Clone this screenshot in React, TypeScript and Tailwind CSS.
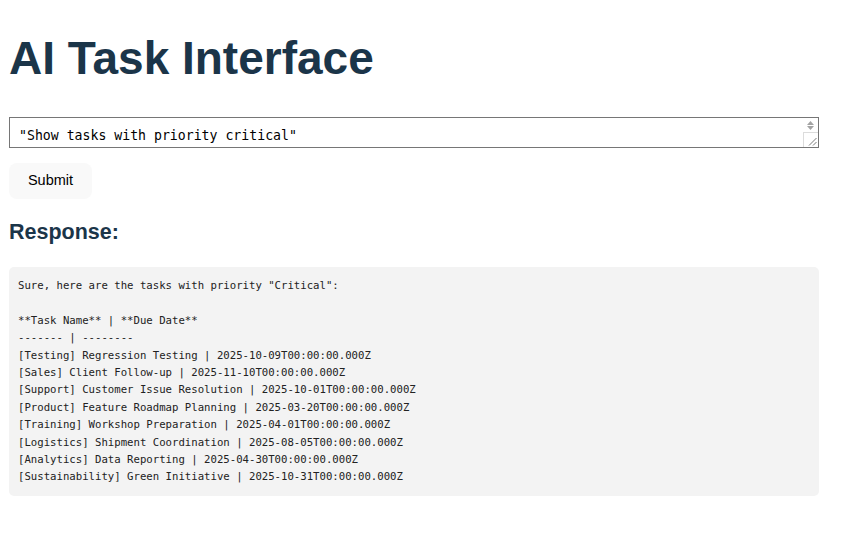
import React from "react";

const lines = [
  'Sure, here are the tasks with priority "Critical":',
  "",
  "**Task Name** | **Due Date**",
  "------- | --------",
  "[Testing] Regression Testing | 2025-10-09T00:00:00.000Z",
  "[Sales] Client Follow-up | 2025-11-10T00:00:00.000Z",
  "[Support] Customer Issue Resolution | 2025-10-01T00:00:00.000Z",
  "[Product] Feature Roadmap Planning | 2025-03-20T00:00:00.000Z",
  "[Training] Workshop Preparation | 2025-04-01T00:00:00.000Z",
  "[Logistics] Shipment Coordination | 2025-08-05T00:00:00.000Z",
  "[Analytics] Data Reporting | 2025-04-30T00:00:00.000Z",
  "[Sustainability] Green Initiative | 2025-10-31T00:00:00.000Z",
];

export default function App() {
  return (
    <div className="min-h-[543px] bg-white">
      <div className="ml-[9px] w-[810px] pt-[32px] font-['Liberation_Sans',Arial,sans-serif]">
        <h1 className="text-[46px] leading-[52px] font-bold text-[#1b3549]">AI Task Interface</h1>
        <div className="relative mt-[33px] h-[31px]">
          <textarea
            readOnly
            value={'"Show tasks with priority critical"'}
            className="block h-[31px] w-full resize-none overflow-hidden border border-[#767676] bg-white px-[9px] pt-[9px] pb-0 text-[13.2px] leading-[17px] text-black font-['DejaVu_Sans_Mono',monospace] outline-none"
          />
          <div className="absolute right-[1px] top-[1px] flex h-[29px] w-[15px] flex-col">
            <div className="flex h-[14px] flex-col items-center justify-center gap-[1px]">
              <svg width="7" height="4" viewBox="0 0 7 4"><path d="M0 4 L3.5 0 L7 4 Z" fill="#a3a3a3" /></svg>
              <svg width="7" height="4" viewBox="0 0 7 4"><path d="M0 0 L7 0 L3.5 4 Z" fill="#a3a3a3" /></svg>
            </div>
            <div className="relative h-[15px] border-l border-t border-[#dcdcdc] bg-white">
              <svg className="absolute right-[1px] bottom-[1px]" width="9" height="9" viewBox="0 0 9 9">
                <path d="M8.5 1 L1 8.5 M8.5 5 L5 8.5" stroke="#6b6b6b" strokeWidth="0.9" />
              </svg>
            </div>
          </div>
        </div>
        <button className="mt-[15px] flex h-[36px] w-[83px] items-center justify-center rounded-[8px] bg-[#f9f9f9] text-[14.5px] text-black">
          Submit
        </button>
        <h2 className="mt-[21px] text-[21.5px] leading-[25px] font-bold text-[#1b3549]">Response:</h2>
        <pre className="mt-[22px] rounded-[5px] bg-[#f3f3f3] px-[9px] py-[10px] text-[10.67px] leading-[17.4px] text-[#222] font-['DejaVu_Sans_Mono',monospace] whitespace-pre">
          {lines.join("\n")}
        </pre>
      </div>
    </div>
  );
}
